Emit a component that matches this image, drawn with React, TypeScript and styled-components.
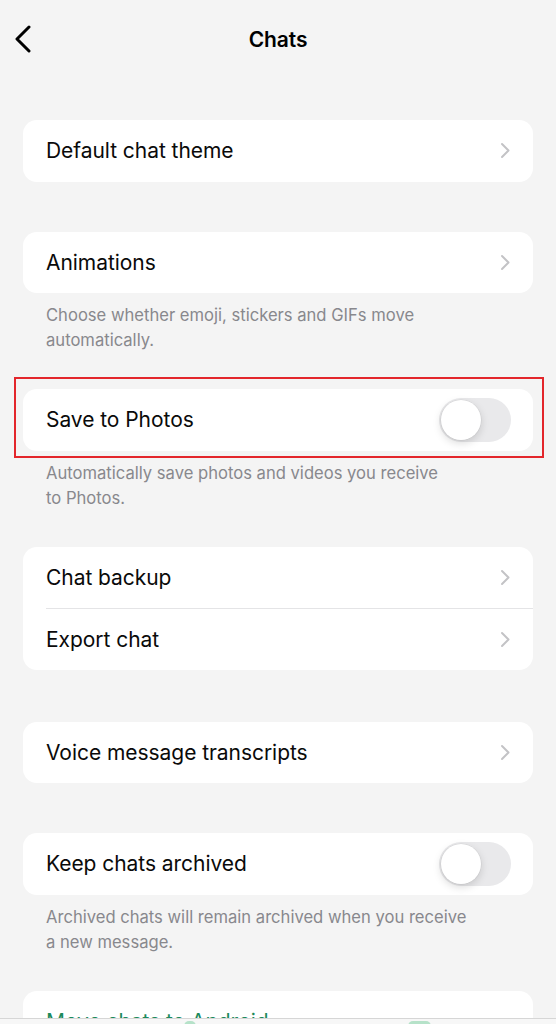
import React from "react";
import styled, { createGlobalStyle } from "styled-components";

const GlobalStyle = createGlobalStyle`
  html, body {
    margin: 0;
    padding: 0;
    background: #f4f4f4;
  }
  body {
    font-family: Inter, "Noto Sans", "Liberation Sans", sans-serif;
    color: #000;
    -webkit-font-smoothing: antialiased;
  }
  * { box-sizing: border-box; }
`;

const Screen = styled.div`
  width: 556px;
  min-height: 1200px;
  background: #f4f4f4;
`;

const Header = styled.header`
  height: 78px;
  display: grid;
  grid-template-columns: 1fr auto 1fr;
  align-items: center;
  padding: 0 14px;
`;

const BackButton = styled.button`
  justify-self: start;
  width: 20px;
  height: 28px;
  padding: 0;
  border: none;
  background: none;
  display: flex;
  align-items: center;
  cursor: pointer;
`;

const Title = styled.h1`
  margin: 0;
  font-size: 21px;
  font-weight: 600;
  letter-spacing: -0.1px;
`;

const List = styled.main`
  padding: 42px 23px 0;
  display: flex;
  flex-direction: column;
`;

const Section = styled.section<{ $gap: number }>`
  display: flex;
  flex-direction: column;
  margin-bottom: ${(p) => p.$gap}px;
`;

const Card = styled.div`
  position: relative;
  background: #fff;
  border-radius: 14px;
  display: flex;
  flex-direction: column;
`;

const Highlight = styled.div`
  position: absolute;
  top: -12px;
  left: -9px;
  right: -11px;
  bottom: -7px;
  border: 2px solid #e3262b;
  pointer-events: none;
`;

const Row = styled.div`
  display: flex;
  padding-left: 23px;
`;

const RowBody = styled.div<{ $divider?: boolean; $tight?: boolean }>`
  flex: 1;
  height: 61.5px;
  display: flex;
  align-items: center;
  justify-content: space-between;
  padding-right: ${(p) => (p.$tight ? 22 : 23)}px;
  border-top: ${(p) => (p.$divider ? "1px solid #e4e4e6" : "none")};
`;

const Label = styled.span<{ $accent?: boolean }>`
  font-size: 21px;
  font-weight: 400;
  letter-spacing: -0.05px;
  color: ${(p) => (p.$accent ? "#1c8a5c" : "#0a0a0a")};
`;

const Footer = styled.p`
  margin: 0;
  padding: 10px 23px 0;
  font-size: 16.6px;
  line-height: 25px;
  color: #88888d;
  letter-spacing: 0;
`;

const Track = styled.span<{ $on?: boolean }>`
  width: 72px;
  height: 44px;
  border-radius: 22px;
  background: ${(p) => (p.$on ? "#34c759" : "#e9e9eb")};
  display: flex;
  align-items: center;
  padding: 2px;
  justify-content: ${(p) => (p.$on ? "flex-end" : "flex-start")};
`;

const Knob = styled.span`
  width: 40px;
  height: 40px;
  border-radius: 50%;
  background: #fff;
  box-shadow: 0 3px 8px rgba(0, 0, 0, 0.15), 0 0 0 0.6px rgba(0, 0, 0, 0.06);
`;

const TabBar = styled.nav`
  position: fixed;
  left: 0;
  right: 0;
  top: 1018px;
  height: 90px;
  background: #f7f7f7;
  border-top: 1px solid #d6d6d6;
  display: flex;
  align-items: flex-start;
  padding: 2px 0 0 184px;
  gap: 212px;
`;

const TabIcon = styled.span<{ $w: number }>`
  width: ${(p) => p.$w}px;
  height: 10px;
  border-radius: 6px;
  background: #b6e2c9;
`;

const Chevron = () => (
  <svg width="10" height="17" viewBox="0 0 10 17" fill="none">
    <path d="M2 2 L8.5 8.5 L2 15" stroke="#c3c3c6" strokeWidth="2" strokeLinecap="round" strokeLinejoin="round" />
  </svg>
);

const BackChevron = () => (
  <svg width="18" height="28" viewBox="0 0 18 28" fill="none">
    <path d="M15 2 L3 14 L15 26" stroke="#000" strokeWidth="3" strokeLinecap="round" strokeLinejoin="round" />
  </svg>
);

const Toggle = ({ on }: { on?: boolean }) => (
  <Track $on={on}>
    <Knob />
  </Track>
);

type Item = { label: string; kind: "link" | "toggle" | "accent" };

const SettingRow = ({ item, divider }: { item: Item; divider?: boolean }) => (
  <Row>
    <RowBody $divider={divider} $tight={item.kind === "toggle"}>
      <Label $accent={item.kind === "accent"}>{item.label}</Label>
      {item.kind === "link" && <Chevron />}
      {item.kind === "toggle" && <Toggle />}
    </RowBody>
  </Row>
);

type Group = {
  items: Item[];
  gap: number;
  footer?: React.ReactNode;
  highlight?: boolean;
};

const groups: Group[] = [
  { items: [{ label: "Default chat theme", kind: "link" }], gap: 50 },
  {
    items: [{ label: "Animations", kind: "link" }],
    gap: 36,
    footer: (
      <>
        Choose whether emoji, stickers and GIFs move
        <br />
        automatically.
      </>
    ),
  },
  {
    items: [{ label: "Save to Photos", kind: "toggle" }],
    gap: 36,
    highlight: true,
    footer: (
      <>
        Automatically save photos and videos you receive
        <br />
        to Photos.
      </>
    ),
  },
  {
    items: [
      { label: "Chat backup", kind: "link" },
      { label: "Export chat", kind: "link" },
    ],
    gap: 52,
  },
  { items: [{ label: "Voice message transcripts", kind: "link" }], gap: 50 },
  {
    items: [{ label: "Keep chats archived", kind: "toggle" }],
    gap: 36,
    footer: (
      <>
        Archived chats will remain archived when you receive
        <br />a new message.
      </>
    ),
  },
  { items: [{ label: "Move chats to Android", kind: "accent" }], gap: 36 },
];

export default function App() {
  return (
    <Screen>
      <GlobalStyle />
      <Header>
        <BackButton aria-label="Back">
          <BackChevron />
        </BackButton>
        <Title>Chats</Title>
        <span />
      </Header>
      <List>
        {groups.map((g, gi) => (
          <Section key={gi} $gap={g.gap}>
            <Card>
              {g.items.map((it, i) => (
                <SettingRow key={it.label} item={it} divider={i > 0} />
              ))}
              {g.highlight && <Highlight />}
            </Card>
            {g.footer && <Footer>{g.footer}</Footer>}
          </Section>
        ))}
      </List>
      <TabBar>
        <TabIcon $w={12} />
        <TabIcon $w={23} />
      </TabBar>
    </Screen>
  );
}
